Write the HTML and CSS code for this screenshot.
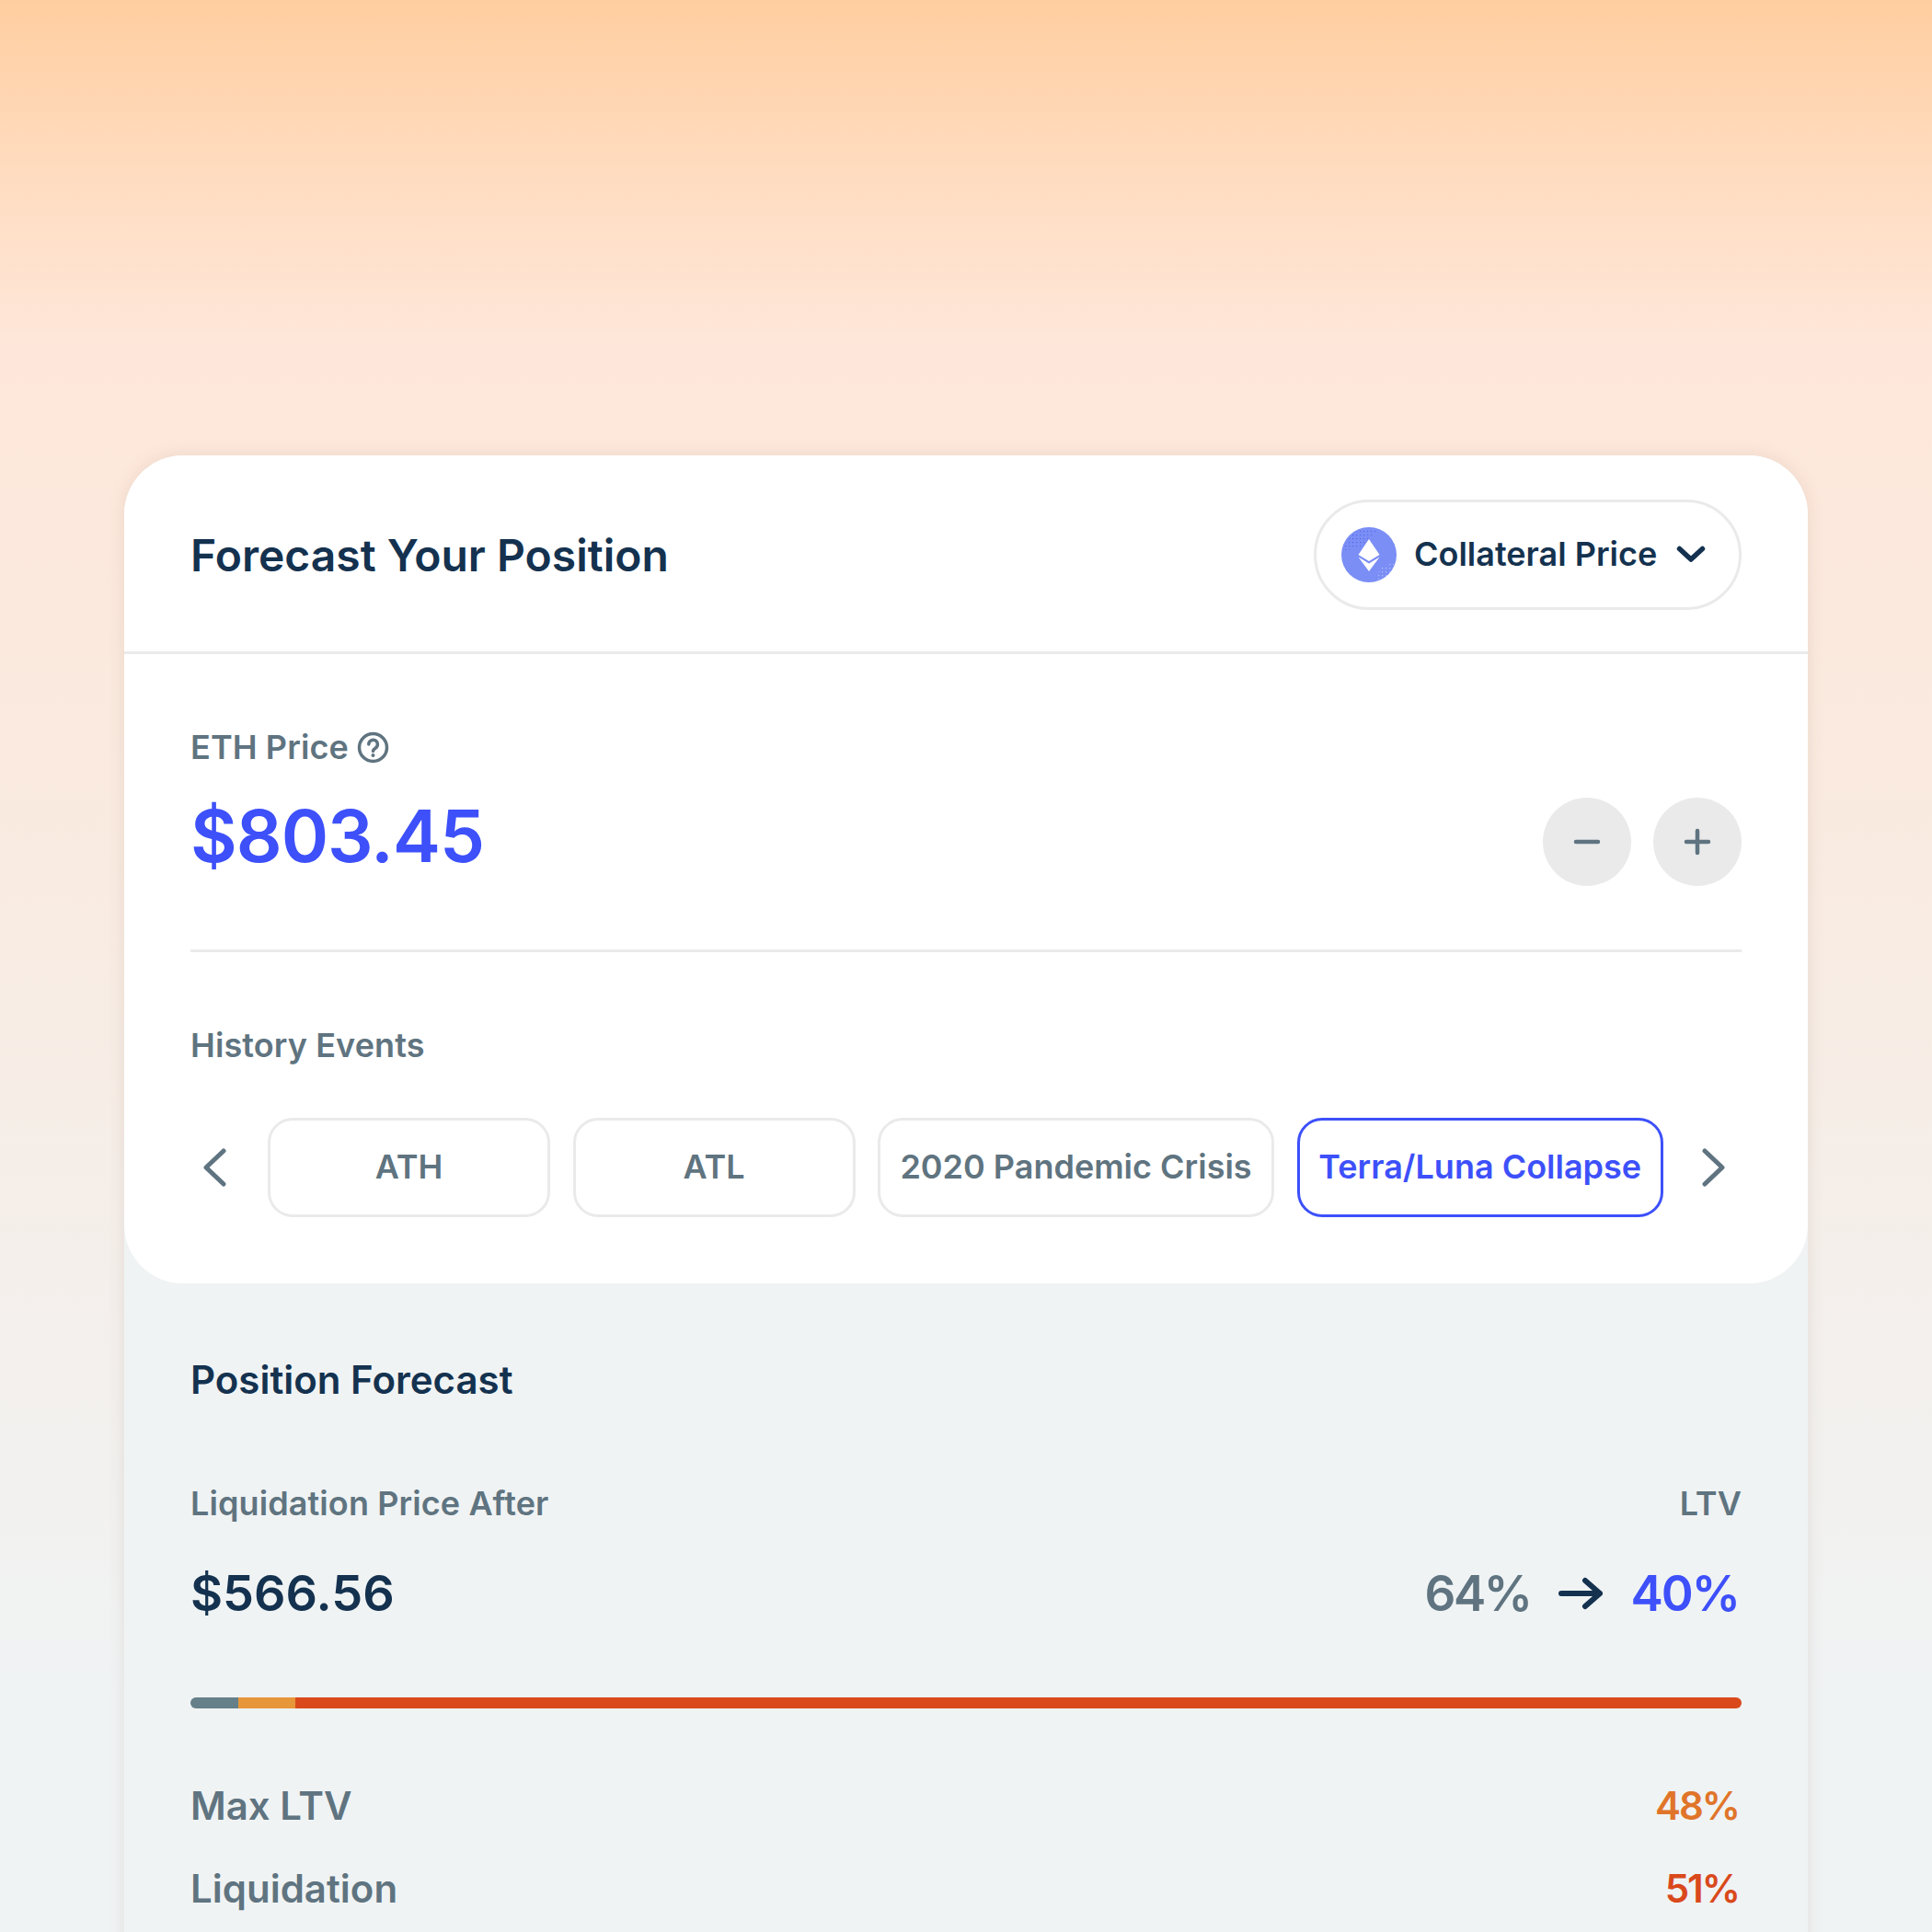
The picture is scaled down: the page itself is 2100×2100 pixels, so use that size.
FILE: index.html
```html
<!DOCTYPE html>
<html>
	<head>
		<meta charset="UTF-8">
		<meta name="viewport" content="width=device-width, initial-scale=1.0">
		<title>Forecast Your Position</title>
		<link rel="stylesheet" href="styles.css">
	</head>
	<body>
		<div class="card">
			<div class="card-top">
				<header class="card-header">
					<h1>Forecast Your Position</h1>
					<button class="select">
						<svg class="eth" width="60" height="60" viewBox="0 0 60 60">
							<defs>
								<pattern id="dots" width="4" height="4" patternUnits="userSpaceOnUse">
									<rect width="1.2" height="1.2" fill="#5468f0"></rect>
								</pattern>
								<pattern id="dotsLight" width="4" height="4" patternUnits="userSpaceOnUse">
									<rect width="1.2" height="1.2" fill="#b4c0fa"></rect>
								</pattern>
							</defs>
							<circle cx="30" cy="30" r="30" fill="#7b8ef5"></circle>
							<path d="M2 26A28 28 0 0 1 40 3L20 22Z" fill="url(#dots)"></path>
							<path d="M38 58A28 28 0 0 0 58 38L42 44Z" fill="url(#dotsLight)"></path>
							<path d="M30 13L18.500 30L30 37L41.500 30Z" fill="#fff"></path>
							<path d="M18.500 32.500L30 39.500L41.500 32.500L30 48Z" fill="#fff"></path>
						</svg>
						<span>Collateral Price</span>
						<svg class="caret" width="32" height="32" viewBox="0 0 32 32">
							<path d="M3.500 9.500L16 21L28.500 9.500" fill="none" stroke="#14324f" stroke-width="5.500" stroke-linecap="round" stroke-linejoin="round"></path>
						</svg>
					</button>
				</header>

				<section class="price">
					<div class="price-left">
						<div class="label">
							ETH Price
							<svg width="35" height="35" viewBox="0 0 35 35">
								<circle cx="17.500" cy="17.500" r="15" fill="none" stroke="#5f7480" stroke-width="3.500"></circle>
								<path d="M12.800 14a4.800 4.800 0 1 1 7.500 4c-1.700 1.100-2.800 2-2.800 3.400" fill="none" stroke="#5f7480" stroke-width="3.500" stroke-linecap="round"></path>
								<circle cx="17.500" cy="26" r="2" fill="#5f7480"></circle>
							</svg>
						</div>
						<div class="price-value">$803.45</div>
					</div>
					<div class="steppers">
						<button class="round">
							<svg width="32" height="32" viewBox="0 0 32 32">
								<path d="M4 16H28" stroke="#5f7480" stroke-width="4.500" stroke-linecap="round"></path>
							</svg>
						</button>
						<button class="round">
							<svg width="32" height="32" viewBox="0 0 32 32">
								<path d="M4 16H28M16 4V28" stroke="#5f7480" stroke-width="4.500" stroke-linecap="round"></path>
							</svg>
						</button>
					</div>
				</section>

				<section class="events">
					<div class="label">History Events</div>
					<div class="chips">
						<svg class="arrow arrow-prev" width="26" height="42" viewBox="0 0 26 42">
							<path d="M23 3L4 21L23 39" fill="none" stroke="#5f7480" stroke-width="5" stroke-linecap="round" stroke-linejoin="round"></path>
						</svg>
						<div class="chip-list">
							<div class="chip chip-ath">ATH</div>
							<div class="chip chip-ath">ATL</div>
							<div class="chip chip-crisis">2020 Pandemic Crisis</div>
							<div class="chip chip-terra active">Terra/Luna Collapse</div>
						</div>
						<svg class="arrow arrow-next" width="26" height="42" viewBox="0 0 26 42">
							<path d="M3 3L22 21L3 39" fill="none" stroke="#5f7480" stroke-width="5" stroke-linecap="round" stroke-linejoin="round"></path>
						</svg>
					</div>
				</section>
			</div>

			<div class="forecast">
				<h2>Position Forecast</h2>
				<div class="row row-labels">
					<span class="label">Liquidation Price After</span>
					<span class="label">LTV</span>
				</div>
				<div class="row row-values">
					<span class="liq">$566.56</span>
					<span class="ltv">
						<span class="old">64%</span>
						<svg width="50" height="40" viewBox="0 0 50 40">
							<path d="M5 20H47M31 6L47 20L31 34" fill="none" stroke="#14324f" stroke-width="6" stroke-linecap="round" stroke-linejoin="round"></path>
						</svg>
						<span class="new">40%</span>
					</span>
				</div>
				<div class="bar">
					<div class="bar-grey"></div>
					<div class="bar-orange"></div>
					<div class="bar-red"></div>
				</div>
				<div class="row row-stat">
					<span>Max LTV</span>
					<span class="pct orange">48%</span>
				</div>
				<div class="row row-stat">
					<span>Liquidation</span>
					<span class="pct red">51%</span>
				</div>
			</div>
		</div>
	</body>
</html>
```

FILE: styles.css
```css
html,
body {
	height: 2100px;
}

body {
	font-family: Inter, "Noto Sans", sans-serif;
	margin: 0;
	padding: 495px 135px 0;
	box-sizing: border-box;
	overflow: hidden;
	background: linear-gradient(180deg, #ffcea0 0%, #ffdcc0 9%, #fee7da 18%, #f9ebe1 45%, #f4efeb 66%, #f0f3f4 88%);
	color: #14324f;
}

.card {
	background-color: #f0f3f4;
	border-radius: 64px 64px 0 0;
	box-shadow: 0 0 18px rgba(120, 90, 70, 0.13);
	height: 1700px;
}

.card-top {
	background-color: #fff;
	border-radius: 64px;
	height: 900px;
}

.card-header {
	display: flex;
	justify-content: space-between;
	align-items: center;
	height: 210px;
	padding: 3px 72px 0;
	border-bottom: 3px solid #eaeaea;
}

h1 {
	margin: 0;
	font-size: 48px;
	font-weight: 600;
}

.select {
	display: flex;
	align-items: center;
	height: 120px;
	width: 465px;
	box-sizing: border-box;
	padding: 0 36px 0 27px;
	background: #fff;
	border: 3px solid #eaeaea;
	border-radius: 60px;
	font-family: inherit;
	font-size: 36px;
	font-weight: 600;
	color: #14324f;
}

.select span {
	margin-left: 19px;
	padding-bottom: 2px;
	flex: 1;
	text-align: left;
}

.label {
	display: flex;
	align-items: center;
	gap: 9px;
	font-size: 36px;
	font-weight: 600;
	letter-spacing: 0.1px;
	color: #5f7480;
}

.price {
	display: flex;
	justify-content: space-between;
	margin: 0 72px;
	height: 324px;
	box-sizing: border-box;
	padding-top: 79px;
	border-bottom: 3px solid #eaeaea;
}

.price-value {
	margin-top: 26px;
	font-size: 78px;
	font-weight: 600;
	letter-spacing: -1px;
	line-height: 97px;
	color: #3d50fa;
}

.steppers {
	display: flex;
	gap: 24px;
	padding-top: 77px;
}

.round {
	display: flex;
	justify-content: center;
	align-items: center;
	width: 96px;
	height: 96px;
	padding: 0;
	border: none;
	border-radius: 50%;
	background-color: #eaeaea;
}

.events {
	margin: 0 72px;
	padding-top: 79px;
}

.chips {
	display: flex;
	align-items: center;
	margin-top: 57px;
}

.chip-list {
	display: flex;
	gap: 24.500px;
}

.arrow {
	flex: none;
}

.arrow-prev {
	margin: 0 45px 0 13px;
}

.arrow-next {
	margin-left: 42px;
}

.chip {
	display: flex;
	justify-content: center;
	align-items: center;
	height: 108px;
	box-sizing: border-box;
	padding-bottom: 2px;
	border: 3px solid #eaeaea;
	border-radius: 27px;
	font-size: 36px;
	font-weight: 600;
	color: #5f7480;
}

.chip-ath {
	width: 307px;
}

.chip-crisis {
	width: 431px;
}

.chip-terra {
	width: 398.500px;
}

.chip.active {
	border-color: #3d50fa;
	color: #3d50fa;
}

.forecast {
	padding: 0 72px;
}

h2 {
	margin: 0;
	padding-top: 78px;
	font-size: 42px;
	font-weight: 600;
	line-height: 54px;
}

.row {
	display: flex;
	justify-content: space-between;
	align-items: center;
}

.row-labels {
	margin-top: 85px;
}

.row-values {
	height: 65px;
	margin-top: 43px;
}

.liq {
	font-size: 54px;
	font-weight: 600;
}

.ltv {
	display: flex;
	align-items: center;
	gap: 31px;
	padding-right: 3px;
	font-size: 53px;
	font-weight: 600;
	letter-spacing: -2px;
}

.old {
	margin-right: -3px;
	letter-spacing: -2.500px;
	color: #5f7480;
}

.new {
	color: #3d50fa;
}

.bar {
	display: flex;
	height: 12px;
	margin-top: 81px;
	border-radius: 6px;
	overflow: hidden;
}

.bar-grey {
	width: 52px;
	background-color: #668089;
}

.bar-orange {
	width: 62px;
	background-color: #e8963a;
}

.bar-red {
	flex: 1;
	background-color: #d9491c;
}

.row-stat {
	height: 90px;
	font-size: 42px;
	font-weight: 600;
	color: #5f7480;
}

.bar + .row-stat {
	margin-top: 60px;
}

.pct {
	padding-right: 3px;
	letter-spacing: -2px;
}

.orange {
	color: #e0752a;
}

.red {
	color: #d9491c;
}
```
